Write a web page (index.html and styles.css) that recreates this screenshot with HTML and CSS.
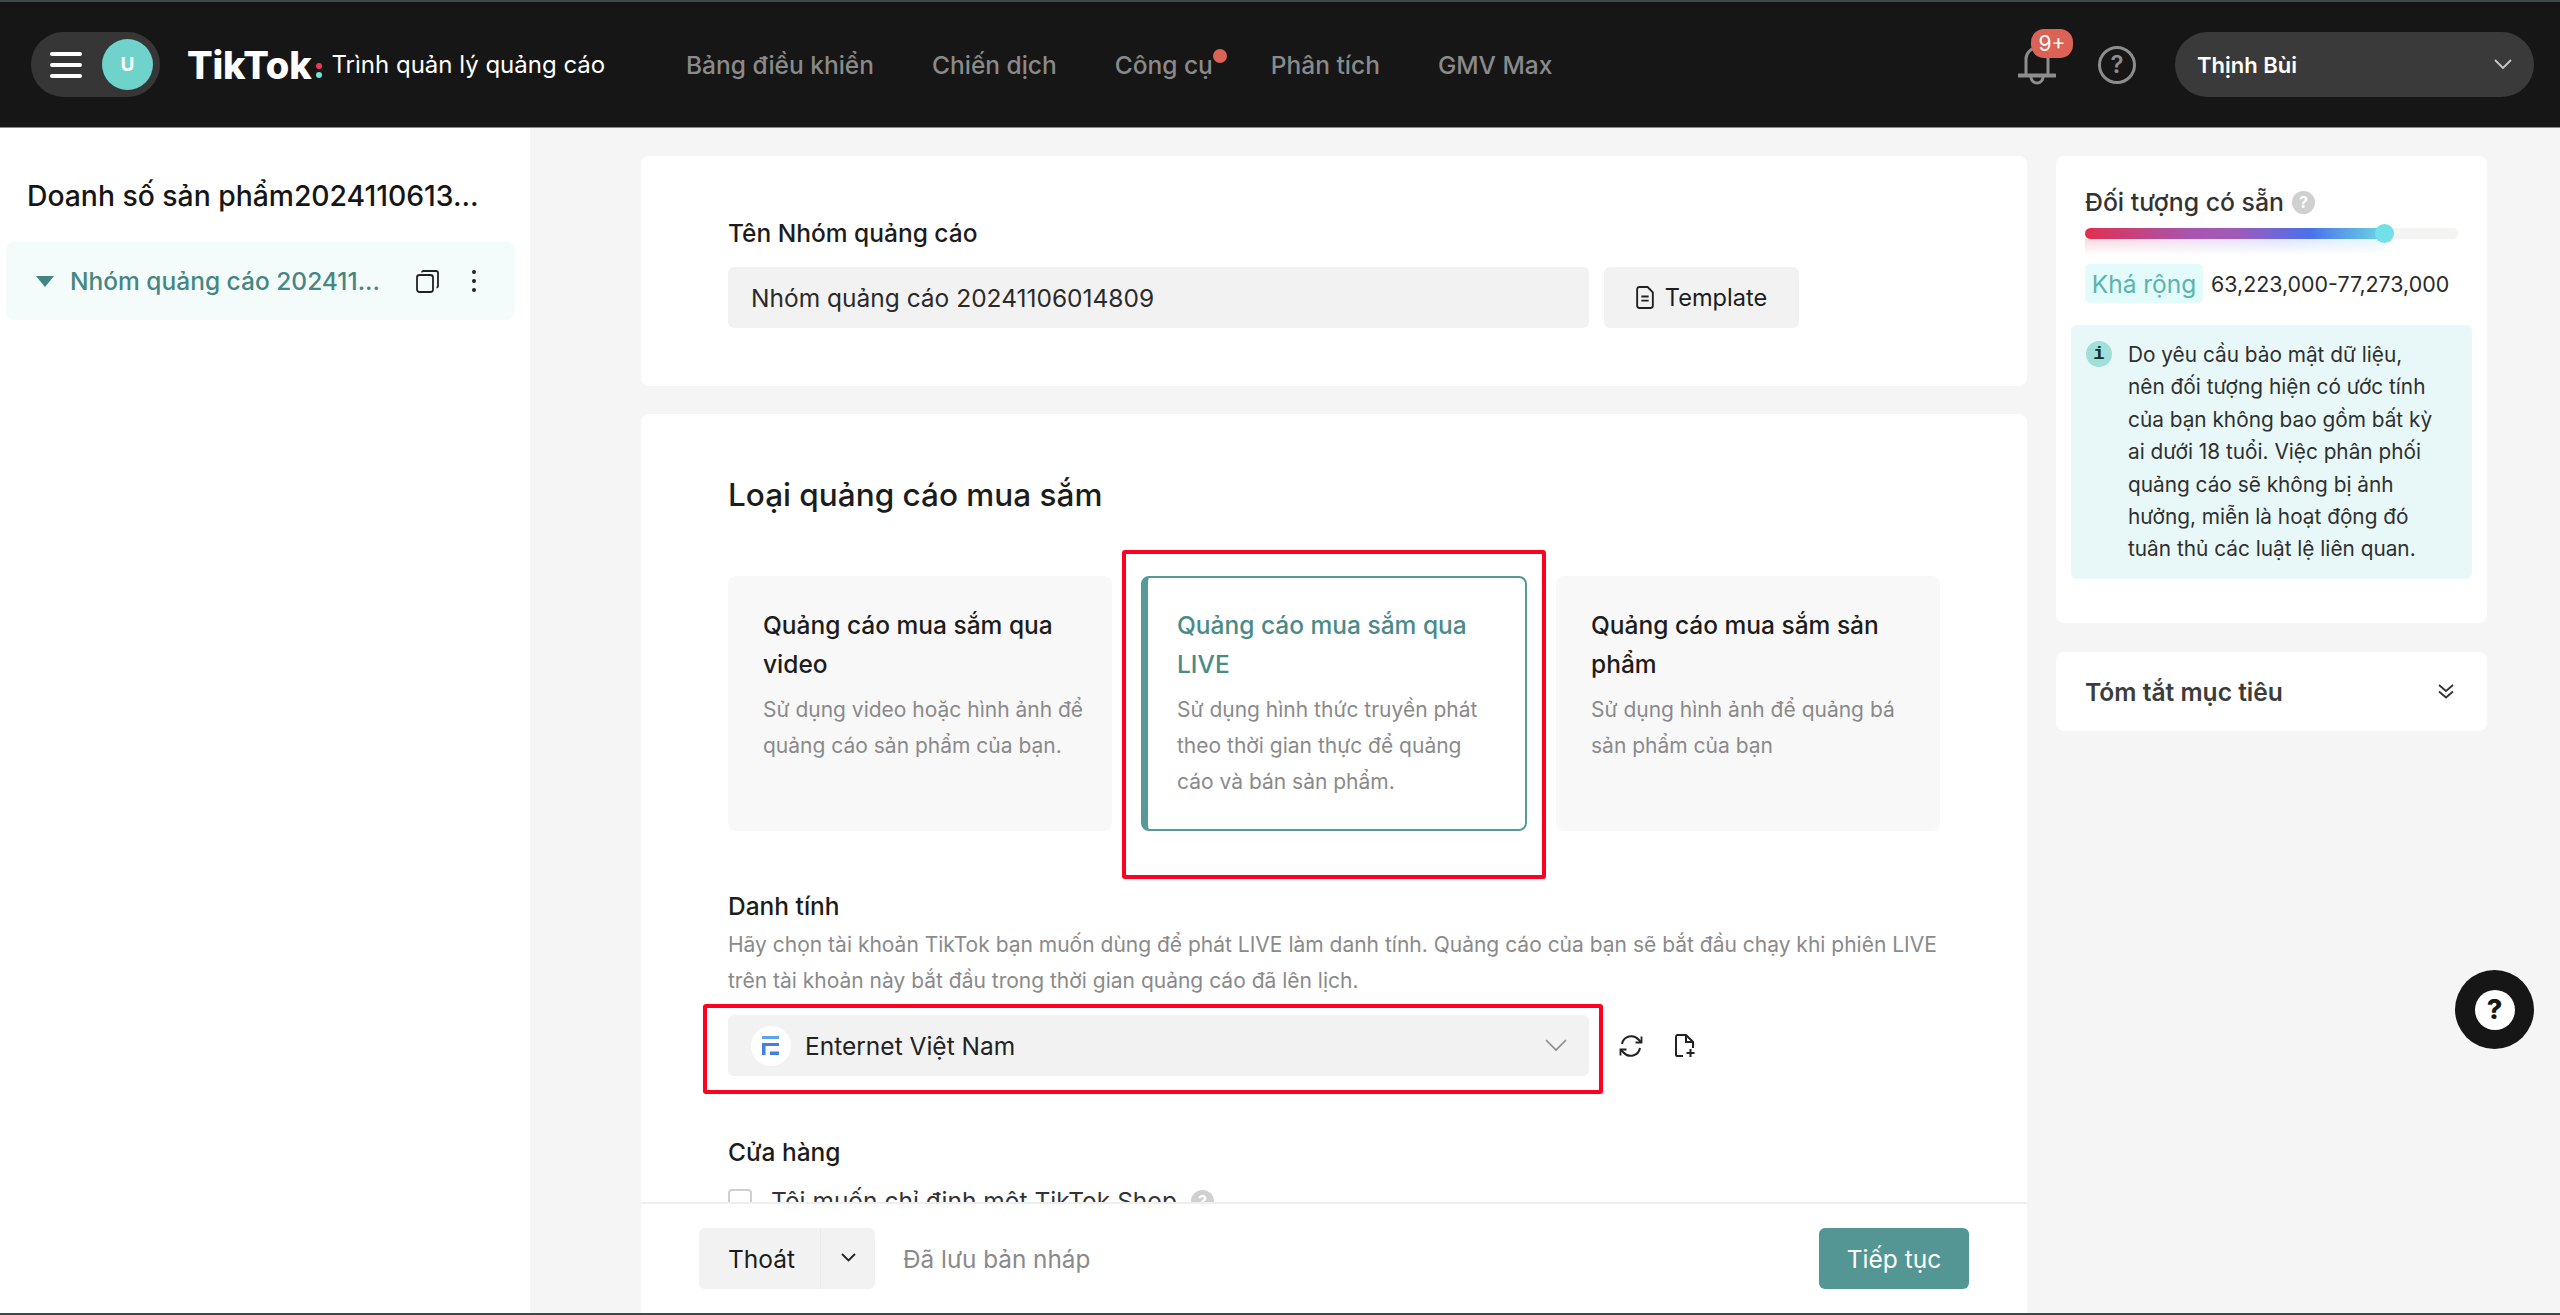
FILE: index.html
```html
<!DOCTYPE html>
<html lang="vi">
<head>
<meta charset="utf-8">
<title>TikTok: Trình quản lý quảng cáo</title>
<link rel="stylesheet" href="styles.css">
</head>
<body>
<div class="app">
  <header class="topbar">
    <div class="menu-pill">
      <span class="burger"><i></i><i></i><i></i></span>
      <span class="avatar">U</span>
    </div>
    <div class="brand">
      <span class="brand-name">TikTok</span>
      <span class="brand-dots"><i class="dot-red"></i><i class="dot-cyan"></i></span>
      <span class="brand-sub">Trình quản lý quảng cáo</span>
    </div>
    <nav class="nav">
      <a>Bảng điều khiển</a>
      <a>Chiến dịch</a>
      <a class="has-dot">Công cụ</a>
      <a>Phân tích</a>
      <a>GMV Max</a>
    </nav>
    <div class="top-actions">
      <div class="bell">
        <svg class="bell-icon" width="38" height="40" viewBox="0 0 38 40" fill="none" stroke="#8d8d8d" stroke-width="3"><path d="M8 29V13a11 11 0 0 1 22 0v16"/><path d="M1 29.500h36" stroke-linecap="round" stroke-width="4"/><path d="M13 31a6 6 0 0 0 12 0"/></svg>
        <span class="badge">9+</span>
      </div>
      <span class="q-icon">?</span>
      <div class="user-pill">
        <span class="user-name">Thịnh Bùi</span>
        <svg width="18" height="11" viewBox="0 0 18 11" fill="none" stroke="#c9c9c9" stroke-width="1.800"><path d="M1 1l8 8 8-8"/></svg>
      </div>
    </div>
  </header>

  <div class="body">
    <aside class="sidebar">
      <h2 class="campaign">Doanh số sản phẩm2024110613...</h2>
      <div class="tree-row">
        <span class="caret"></span>
        <span class="tree-name">Nhóm quảng cáo 202411...</span>
        <svg class="tree-copy" width="23" height="23" viewBox="0 0 23 23" fill="none" stroke="#222" stroke-width="1.800"><rect x="1" y="5" width="16" height="17" rx="2.500"/><path d="M6 2.500q0-1.500 1.500-1.500H20q2 0 2 2v13q0 1.500-1.500 1.500"/></svg>
        <span class="kebab"><i></i><i></i><i></i></span>
      </div>
    </aside>

    <main class="center">
      <div class="scroller">
        <section class="card card-name">
          <div class="field-label">Tên Nhóm quảng cáo</div>
          <div class="name-row">
            <div class="input">Nhóm quảng cáo 20241106014809</div>
            <div class="template-btn">
              <svg width="18" height="23" viewBox="0 0 17 22" fill="none" stroke="#222" stroke-width="1.800"><path d="M3 1h8l5 5v13a2 2 0 0 1-2 2H3a2 2 0 0 1-2-2V3a2 2 0 0 1 2-2z"/><path d="M5 10h7M5 14h7"/></svg>
              <span>Template</span>
            </div>
          </div>
        </section>

        <section class="card card-type">
          <h3 class="section-title">Loại quảng cáo mua sắm</h3>
          <div class="options">
            <div class="option">
              <div class="option-title">Quảng cáo mua sắm qua video</div>
              <div class="option-desc">Sử dụng video hoặc hình ảnh để quảng cáo sản phẩm của bạn.</div>
            </div>
            <div class="option selected">
              <div class="option-title">Quảng cáo mua sắm qua LIVE</div>
              <div class="option-desc">Sử dụng hình thức truyền phát theo thời gian thực để quảng cáo và bán sản phẩm.</div>
              <span class="mark mark-option"></span>
            </div>
            <div class="option">
              <div class="option-title">Quảng cáo mua sắm sản phẩm</div>
              <div class="option-desc">Sử dụng hình ảnh để quảng bá sản phẩm của bạn</div>
            </div>
          </div>

          <div class="field-label label-identity">Danh tính</div>
          <p class="field-help">Hãy chọn tài khoản TikTok bạn muốn dùng để phát LIVE làm danh tính. Quảng cáo của bạn sẽ bắt đầu chạy khi phiên LIVE trên tài khoản này bắt đầu trong thời gian quảng cáo đã lên lịch.</p>
          <div class="identity-row">
            <div class="select">
              <span class="logo-circle">
                <svg width="18" height="20" viewBox="0 0 18 20"><rect x="0" y="0" width="17" height="3" fill="#5ea3ee"/><rect x="0" y="7" width="17" height="3" fill="#3f7fe8"/><rect x="0" y="7" width="3.500" height="12" fill="#3f7fe8"/><rect x="8" y="15.500" width="9" height="3.500" fill="#3f7fe8"/></svg>
              </span>
              <span class="select-value">Enternet Việt Nam</span>
              <svg class="select-chevron" width="22" height="13" viewBox="0 0 22 13" fill="none" stroke="#8a8a8a" stroke-width="1.600"><path d="M1 1l10 10L21 1"/></svg>
              <span class="mark mark-select"></span>
            </div>
            <svg class="row-icon" width="24" height="24" viewBox="0 0 24 24" fill="none" stroke="#222" stroke-width="2"><path d="M3 10a9.500 9.500 0 0 1 16.500-4.500L22 8"/><path d="M22.500 2.500V8.500H16.500" stroke-width="1.800"/><path d="M21 14a9.500 9.500 0 0 1-16.500 4.500L2 16"/><path d="M1.500 21.500V15.500H7.500" stroke-width="1.800"/></svg>
            <svg class="row-icon" width="22" height="24" viewBox="0 0 22 24" fill="none" stroke="#222" stroke-width="2"><path d="M9 22H3a2 2 0 0 1-1-1V3a2 2 0 0 1 1-2h9l7 7v6"/><path d="M12 1v7h7"/><path d="M16.500 15v8M12.500 19h8"/></svg>
          </div>

          <div class="field-label label-store">Cửa hàng</div>
          <div class="check-row">
            <span class="checkbox"></span>
            <span>Tôi muốn chỉ định một TikTok Shop</span>
            <span class="hint hint-small">?</span>
          </div>
        </section>
      </div>

      <footer class="footer">
        <div class="split-btn">
          <span class="split-main">Thoát</span>
          <span class="split-arrow">
            <svg width="15" height="9" viewBox="0 0 15 9" fill="none" stroke="#222" stroke-width="1.800"><path d="M1 1l6.500 6.500L14 1"/></svg>
          </span>
        </div>
        <span class="saved">Đã lưu bản nháp</span>
        <button class="primary" type="button">Tiếp tục</button>
      </footer>
    </main>

    <aside class="side">
      <section class="side-card audience">
        <div class="aud-title">Đối tượng có sẵn <span class="hint">?</span></div>
        <div class="meter">
          <div class="meter-fill"></div>
          <div class="meter-glow"></div>
          <span class="meter-thumb"></span>
        </div>
        <div class="aud-range">
          <span class="tag">Khá rộng</span>
          <span class="range-value">63,223,000-77,273,000</span>
        </div>
        <div class="notice">
          <span class="notice-icon">i</span>
          <p>Do yêu cầu bảo mật dữ liệu, nên đối tượng hiện có ước tính của bạn không bao gồm bất kỳ ai dưới 18 tuổi. Việc phân phối quảng cáo sẽ không bị ảnh hưởng, miễn là hoạt động đó tuân thủ các luật lệ liên quan.</p>
        </div>
      </section>
      <section class="side-card summary">
        <span class="summary-title">Tóm tắt mục tiêu</span>
        <svg width="16" height="15" viewBox="0 0 16 15" fill="none" stroke="#333" stroke-width="1.800"><path d="M1 1l7 6 7-6"/><path d="M1 7.500l7 6 7-6"/></svg>
      </section>
      <div class="help-fab"><span>?</span></div>
    </aside>
  </div>
  <div class="bottom-strip"></div>
</div>
</body>
</html>
```

FILE: styles.css
```css
* { box-sizing: border-box; }
html, body { margin: 0; height: 100%; }
body {
  font-family: Inter, "Noto Sans", "Liberation Sans", sans-serif;
  color: #1c1c1c;
  background: #f5f5f5;
  overflow: hidden;
}
h2, h3, p { margin: 0; }
.app { width: 2560px; height: 1315px; display: flex; flex-direction: column; position: relative; overflow: hidden; }

/* top bar */
.topbar {
  height: 128px;
  flex: none;
  background: #161616;
  border-top: 2px solid #43484a;
  border-bottom: 1px solid #8b8b8b;
  display: flex;
  align-items: center;
  padding: 0 26px 0 31px;
}
.menu-pill {
  width: 129px; height: 65px;
  border-radius: 33px;
  background: #363636;
  display: flex; align-items: center;
  padding: 0 7px 0 19px;
  justify-content: space-between;
}
.burger { display: flex; flex-direction: column; gap: 7px; width: 32px; }
.burger i { display: block; height: 4px; background: #fff; border-radius: 2px; }
.avatar {
  width: 51px; height: 51px; border-radius: 50%;
  background: #6fd3cc; color: #fff;
  font-weight: 700; font-size: 19px;
  display: flex; align-items: center; justify-content: center;
}
.brand { display: flex; align-items: center; margin-left: 27px; width: 499px; }
.brand-name { font-size: 38px; font-weight: 800; color: #fff; letter-spacing: -0.2px; line-height: 1; }
.brand-dots { display: flex; flex-direction: column; gap: 3px; margin: 12px 9px 0 5px; }
.brand-dots i { width: 6px; height: 6px; border-radius: 50%; display: block; }
.dot-red { background: #ee3a55; }
.dot-cyan { background: #6fe0e3; }
.brand-sub { font-size: 24px; color: #fff; white-space: nowrap; }
.nav { display: flex; gap: 58px; font-size: 24.5px; font-weight: 500; color: #8a8a8a; white-space: nowrap; }
.nav a { position: relative; }
.has-dot::after {
  content: ""; position: absolute;
  right: -14px; top: -1px;
  width: 14px; height: 14px; border-radius: 50%;
  background: #dc6256;
}
.top-actions { margin-left: auto; display: flex; align-items: center; }
.bell { position: relative; width: 38px; height: 40px; margin: 3px 42px 0 0; }
.bell-icon { display: block; }
.badge {
  position: absolute; left: 13px; top: -17px;
  width: 42px; height: 29px;
  border-radius: 13px;
  background: #dc6256; color: #fff;
  font-size: 21px;
  display: flex; align-items: center; justify-content: center;
}
.q-icon {
  width: 38px; height: 38px;
  border: 3px solid #8d8d8d; border-radius: 50%;
  color: #8d8d8d; font-size: 24px; font-weight: 600;
  display: flex; align-items: center; justify-content: center;
  margin-right: 39px;
}
.user-pill {
  width: 359px; height: 65px;
  border-radius: 33px;
  background: #3a3a3a;
  display: flex; align-items: center; justify-content: space-between;
  padding: 0 22px 0 22px;
}
.user-name { color: #fff; font-size: 22px; font-weight: 600; }

/* layout */
.body { flex: 1; min-height: 0; display: flex; }
.bottom-strip { height: 2px; flex: none; background: #3f474b; }

/* sidebar */
.sidebar { width: 530px; flex: none; background: #fff; padding: 50px 6px 0; }
.campaign { font-size: 28.3px; font-weight: 500; padding-left: 21px; line-height: 36px; color: #161616; white-space: nowrap; }
.tree-row {
  margin-top: 28px;
  width: 509px; height: 78px;
  background: #f4fbfb;
  border-radius: 8px;
  display: flex; align-items: center;
  padding-left: 30px;
}
.caret { width: 0; height: 0; border-left: 9px solid transparent; border-right: 9px solid transparent; border-top: 11px solid #428683; }
.tree-name { margin-left: 16px; width: 346px; font-size: 24.5px; font-weight: 500; color: #468683; white-space: nowrap; }
.kebab { margin-left: 33px; display: flex; flex-direction: column; gap: 5px; }
.kebab i { width: 4px; height: 4px; border-radius: 50%; background: #222; display: block; }

/* centre */
.center { width: 1386px; flex: none; margin-left: 111px; display: flex; flex-direction: column; min-height: 0; }
.scroller { flex: 1; min-height: 0; overflow: hidden; padding-top: 28px; display: flex; flex-direction: column; gap: 28px; }
.card { background: #fff; border-radius: 8px; flex: none; padding: 0 87px; }
.card-name { height: 230px; padding-top: 60px; }
.field-label { font-size: 24.5px; font-weight: 500; line-height: 34px; color: #1c1c1c; }
.name-row { display: flex; gap: 15px; margin-top: 17px; }
.input {
  width: 861px; height: 61px;
  background: #f2f2f2; border-radius: 6px;
  padding-left: 23px;
  display: flex; align-items: center;
  font-size: 24.5px; color: #2a2a2a;
}
.template-btn {
  width: 195px; height: 61px;
  background: #f2f2f2; border-radius: 6px;
  display: flex; align-items: center; justify-content: center; gap: 11px;
  font-size: 23.6px;
}
.card-type { padding-top: 56px; height: 1000px; }
.section-title { font-size: 31.5px; font-weight: 500; line-height: 50px; color: #1c1c1c; }
.options { display: flex; gap: 30px; margin-top: 56px; width: 1214px; }
.option {
  width: 384px; height: 255px; flex: none;
  background: #f8f8f8; border-radius: 8px;
  padding: 30px 28px 0 35px;
  position: relative;
}
.option-title { font-size: 24.5px; font-weight: 500; line-height: 39px; color: #1c1c1c; }
.option-desc { font-size: 21px; line-height: 36px; color: #8a8a8a; margin-top: 8px; }
.selected {
  background: #fff;
  border: 2px solid #559a97;
  border-left: 7px solid #559a97;
  padding: 28px 24px 0 29px;
  width: 386px;
  margin: 0 -1px;
}
.selected .option-title { color: #4a8a87; }
.mark { position: absolute; border: 4px solid #ff0022; border-radius: 3px; pointer-events: none; }
.mark-option { left: -26px; top: -28px; width: 424px; height: 329px; }
.mark-select { left: -25px; top: -11px; width: 900px; height: 90px; }
.label-identity { margin-top: 58px; }
.field-help { font-size: 21px; line-height: 36px; color: #8a8a8a; width: 1212px; margin-top: 4px; }
.identity-row { display: flex; align-items: center; margin-top: 16px; }
.select {
  width: 861px; height: 61px;
  background: #f2f2f2; border-radius: 6px;
  display: flex; align-items: center;
  padding: 0 22px 0 23px;
  position: relative;
  font-size: 24.5px;
}
.logo-circle { width: 40px; height: 40px; border-radius: 50%; background: #fff; display: flex; align-items: center; justify-content: center; }
.select-value { margin-left: 14px; font-weight: 400; color: #222; }
.select-chevron { margin-left: auto; }
.row-icon { flex: none; margin-left: 30px; }
.row-icon + .row-icon { margin-left: 31px; }
.label-store { margin-top: 59px; }
.check-row { display: flex; align-items: center; margin-top: 17px; font-size: 24.5px; color: #333; }
.checkbox { width: 24px; height: 24px; border: 2px solid #cfcfcf; border-radius: 4px; margin-right: 19px; }
.hint-small { margin-left: 14px; }

/* footer */
.footer {
  height: 111px; flex: none;
  background: #fff;
  border-top: 2px solid #eeeeee;
  display: flex; align-items: center;
  padding: 0 58px;
}
.split-btn { width: 176px; height: 61px; background: #f2f2f2; border-radius: 6px; display: flex; font-size: 24.5px; }
.split-main { width: 122px; padding-left: 29px; display: flex; align-items: center; border-right: 1px solid #e8e8e8; }
.split-arrow { flex: 1; display: flex; align-items: center; justify-content: center; padding-bottom: 3px; }
.saved { margin-left: 28px; font-size: 24.3px; color: #8a8a8a; }
.primary {
  margin-left: auto; width: 150px; height: 61px;
  border: 0; border-radius: 6px;
  background: #539693; color: #fff;
  font: 400 24.5px Inter, sans-serif;
}

/* right column */
.side { width: 431px; flex: none; margin-left: 29px; padding-top: 28px; display: flex; flex-direction: column; gap: 29px; position: relative; }
.side-card { background: #fff; border-radius: 8px; flex: none; }
.audience { height: 467px; padding: 28px 15px 0; }
.aud-title { padding-left: 14px; font-size: 24.8px; font-weight: 500; line-height: 36px; color: #333; display: flex; align-items: center; gap: 8px; }
.hint {
  width: 23px; height: 23px; border-radius: 50%;
  background: #d0d0d0; color: #fff;
  font-size: 16px; font-weight: 700;
  display: inline-flex; align-items: center; justify-content: center;
}
.meter { position: relative; margin: 8px 14px 0; height: 11px; background: #f4f4f2; border-radius: 6px; }
.meter-fill { position: absolute; left: 0; top: 0; bottom: 0; width: 300px; border-radius: 6px; background: linear-gradient(90deg, #e0304f 0%, #a855b0 35%, #a05ab8 50%, #4a72ea 75%, #6bd8e4 100%); }
.meter-glow { position: absolute; left: 0; top: 11px; height: 16px; width: 300px; opacity: .18; background: linear-gradient(90deg, #e0304f, #a855b0, #4a72ea, #6bd8e4); -webkit-mask-image: linear-gradient(180deg, #000, transparent); mask-image: linear-gradient(180deg, #000, transparent); }
.meter-thumb { position: absolute; left: 290px; top: -4px; width: 19px; height: 19px; border-radius: 50%; background: #73dfe8; }
.aud-range { display: flex; align-items: center; gap: 8px; margin: 25px 14px 0; }
.tag { height: 39px; width: 118px; background: #e3fbfb; color: #5ab5ad; font-size: 24.5px; border-radius: 5px; display: flex; align-items: center; justify-content: center; white-space: nowrap; }
.range-value { font-size: 21.4px; color: #2a2a2a; white-space: nowrap; }
.notice { margin-top: 22px; height: 254px; background: #e8f8f8; border-radius: 6px; padding: 14px 15px 0; display: flex; gap: 16px; }
.notice-icon { flex: none; width: 26px; height: 26px; border-radius: 50%; background: #a0dfda; color: #12302e; font: 700 19px "Liberation Mono", monospace; display: flex; align-items: center; justify-content: center; margin-top: 2px; }
.notice p { font-size: 20.8px; line-height: 32.4px; color: #2f2f2f; width: 312px; }
.summary { height: 79px; padding: 0 33px 0 29px; display: flex; align-items: center; justify-content: space-between; }
.summary-title { font-size: 24.6px; font-weight: 600; color: #3c3c3c; }
.help-fab {
  position: absolute; left: 399px; top: 842px;
  width: 79px; height: 79px; border-radius: 50%;
  background: #161616;
  display: flex; align-items: center; justify-content: center;
}
.help-fab span {
  width: 40px; height: 40px; border-radius: 50%;
  background: #fff; color: #161616;
  font-size: 27px; font-weight: 800;
  display: flex; align-items: center; justify-content: center;
}
```
